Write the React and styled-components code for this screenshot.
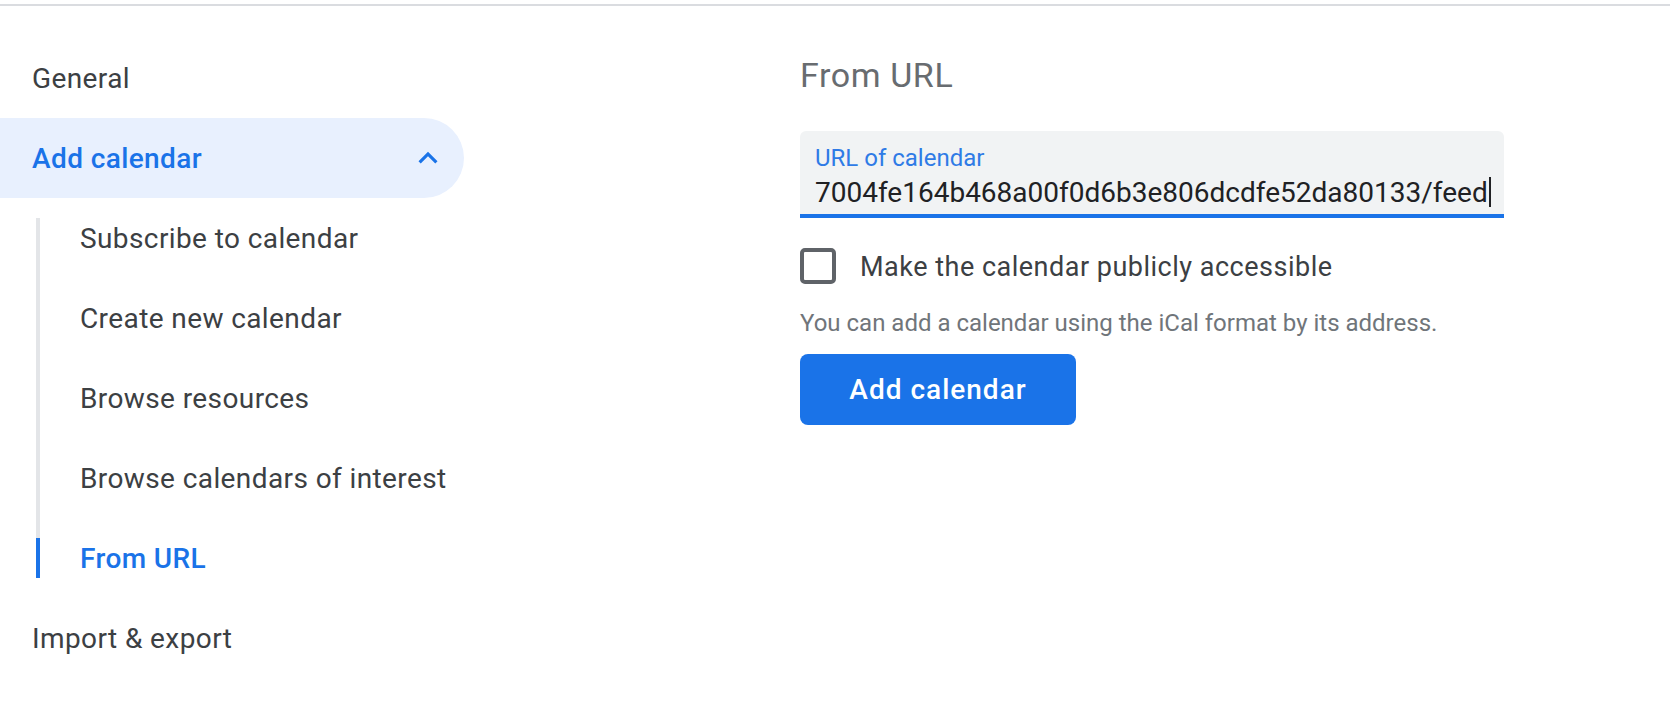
import React from "react";
import styled, { createGlobalStyle, css } from "styled-components";

const GlobalStyle = createGlobalStyle`
  body {
    margin: 0;
    background: #ffffff;
    font-family: Roboto, "Liberation Sans", Arial, sans-serif;
  }
`;

const subItems = [
  "Subscribe to calendar",
  "Create new calendar",
  "Browse resources",
  "Browse calendars of interest",
  "From URL",
];

function ExpandLess() {
  return (
    <svg width="38" height="38" viewBox="0 0 24 24" fill="currentColor">
      <path d="M12 8l-6 6 1.41 1.41L12 10.83l4.59 4.58L18 14z" />
    </svg>
  );
}

function App() {
  const active = "From URL";
  return (
    <Page>
      <GlobalStyle />
      <TopRule />
      <Main>
        <Nav>
          <NavItem>General</NavItem>
          <NavItem $open>
            Add calendar
            <ExpandLess />
          </NavItem>
          <SubList>
            {subItems.map((item) => (
              <SubItem key={item} $active={item === active}>
                {item}
              </SubItem>
            ))}
          </SubList>
          <NavItem>Import &amp; export</NavItem>
        </Nav>
        <Content>
          <Heading>From URL</Heading>
          <Field>
            <FieldLabel>URL of calendar</FieldLabel>
            <FieldValue>
              7004fe164b468a00f0d6b3e806dcdfe52da80133/feed
              <Caret />
            </FieldValue>
          </Field>
          <CheckRow>
            <CheckBox />
            <CheckLabel>Make the calendar publicly accessible</CheckLabel>
          </CheckRow>
          <Helper>You can add a calendar using the iCal format by its address.</Helper>
          <PrimaryButton>Add calendar</PrimaryButton>
        </Content>
      </Main>
    </Page>
  );
}

const Page = styled.div`
  min-height: 100vh;
`;

const TopRule = styled.div`
  margin-top: 4px;
  height: 2px;
  background: #dadce0;
`;

const Main = styled.div`
  display: flex;
  gap: 336px;
  padding-top: 32px;
`;

const Nav = styled.nav`
  width: 464px;
  flex-shrink: 0;
  display: flex;
  flex-direction: column;
`;

const NavItem = styled.div`
  height: 80px;
  display: flex;
  align-items: center;
  justify-content: space-between;
  padding: 0 17px 0 32px;
  font-size: 28px;
  letter-spacing: 0.4px;
  color: #3c4043;
  border-radius: 0 40px 40px 0;
  ${(p) =>
    p.$open &&
    css`
      background: #e8f0fe;
      color: #1a73e8;
      font-weight: 500;
    `}
`;

const SubList = styled.div`
  display: flex;
  flex-direction: column;
  margin: 20px 0 20px 36px;
  border-left: 4px solid #e3e5e8;
`;

const SubItem = styled.div`
  position: relative;
  height: 80px;
  display: flex;
  align-items: center;
  padding-left: 40px;
  font-size: 28px;
  letter-spacing: 0.4px;
  color: #3c4043;
  &:first-child {
    margin-top: -20px;
  }
  &:last-child {
    margin-bottom: -20px;
  }
  ${(p) =>
    p.$active &&
    css`
      color: #1a73e8;
      font-weight: 500;
      &::before {
        content: "";
        position: absolute;
        left: -4px;
        top: 20px;
        width: 4px;
        height: 40px;
        background: #1a73e8;
      }
    `}
`;

const Content = styled.div`
  flex: 1;
  padding-top: 17px;
`;

const Heading = styled.h2`
  margin: 0 0 36px;
  font-size: 34px;
  line-height: 40px;
  letter-spacing: 0.6px;
  font-weight: 400;
  color: #686c70;
`;

const Field = styled.div`
  width: 704px;
  box-sizing: border-box;
  padding: 13px 16px 5px 15px;
  background: #f1f3f4;
  border-radius: 6px 6px 0 0;
  border-bottom: 4px solid #1a73e8;
`;

const FieldLabel = styled.div`
  font-size: 24px;
  line-height: 28px;
  color: #2f7be6;
  margin-bottom: 5px;
`;

const FieldValue = styled.div`
  font-size: 28px;
  line-height: 32px;
  color: #202124;
  white-space: nowrap;
`;

const Caret = styled.span`
  display: inline-block;
  vertical-align: top;
  width: 2px;
  height: 30px;
  margin-left: 1px;
  background: #202124;
`;

const CheckRow = styled.div`
  display: flex;
  align-items: center;
  gap: 24px;
  margin-top: 30px;
`;

const CheckBox = styled.span`
  width: 36px;
  height: 36px;
  box-sizing: border-box;
  border: 4px solid #5f6368;
  border-radius: 5px;
`;

const CheckLabel = styled.span`
  font-size: 27px;
  line-height: 32px;
  letter-spacing: 0.5px;
  padding-top: 2px;
  color: #3c4043;
`;

const Helper = styled.div`
  margin-top: 25px;
  font-size: 24px;
  line-height: 28px;
  color: #70757a;
`;

const PrimaryButton = styled.button`
  display: block;
  margin-top: 17px;
  width: 276px;
  height: 71px;
  border: none;
  border-radius: 8px;
  background: #1a73e8;
  color: #ffffff;
  font-family: Roboto, "Liberation Sans", Arial, sans-serif;
  font-size: 28px;
  font-weight: 500;
  letter-spacing: 1px;
`;

export default App;
